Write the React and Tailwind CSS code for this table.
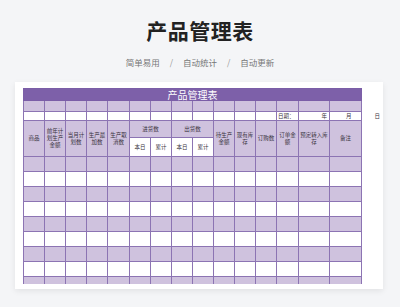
import React from 'react'

const cols = [21, 21, 21, 21, 22, 21, 21, 21, 21, 21, 21, 21, 22, 31, 32]
const dataRows = [0, 1, 2, 3, 4, 5, 6, 7]

const cjk = { fontFamily: '"Noto Sans CJK SC", "Noto Sans", sans-serif' }

function Cell({ children, className = '', ...rest }) {
  return (
    <td
      className={`border border-[#8c74b3] p-0 text-center align-middle leading-[7px] ${className}`}
      {...rest}
    >
      {children}
    </td>
  )
}

export default function App() {
  return (
    <div className="h-[307px] w-[400px] overflow-hidden bg-[#f4f5f7]" style={cjk}>
      {/* Page heading */}
      <div className="flex flex-col items-center pt-[16px]">
        <h1 className="text-[21px] font-bold leading-[28px] tracking-[0.5px] text-[#222]">产品管理表</h1>
        <div className="mt-[11px] flex items-center gap-[10px] text-[8.5px] leading-[14px] text-[#777]">
          <span>简单易用</span>
          <span className="text-[#999]">/</span>
          <span>自动统计</span>
          <span className="text-[#999]">/</span>
          <span>自动更新</span>
        </div>
      </div>

      {/* Sheet card */}
      <div className="ml-[15px] mt-[13px] h-[207px] w-[368px] overflow-hidden bg-white pl-[8px] pt-[6px] shadow-[0_2px_6px_rgba(0,0,0,0.08)]">
        <table className="table-fixed border-collapse text-[5.5px] text-[#3a3340]" style={{ width: 339 }}>
          <colgroup>
            {cols.map((w, i) => (
              <col key={i} style={{ width: w }} />
            ))}
          </colgroup>
          <tbody>
            <tr className="h-[12px]">
              <td colSpan={15} className="border border-[#7b5ea7] bg-[#7d60a9] p-0 text-center text-[10px] leading-[11px] text-white">
                产品管理表
              </td>
            </tr>
            <tr className="h-[11px]">
              {cols.map((_, i) => (
                <Cell key={i} className="bg-[#cfc2de]" />
              ))}
            </tr>
            <tr className="h-[9px]">
              {cols.map((_, i) => {
                if (i === 12)
                  return (
                    <Cell key={i} className="bg-white text-left">
                      <span className="pl-[1px]">日期：</span>
                    </Cell>
                  )
                if (i === 13)
                  return (
                    <Cell key={i} className="bg-white text-right">
                      <span className="pr-[2px]">年</span>
                    </Cell>
                  )
                if (i === 14)
                  return (
                    <Cell key={i} className="overflow-visible whitespace-nowrap bg-white text-left">
                      <span className="pl-[16px]">月</span>
                      <span className="pl-[23px]">日</span>
                    </Cell>
                  )
                return <Cell key={i} className="bg-white" />
              })}
            </tr>
            <tr className="h-[17px]">
              <Cell rowSpan={2} className="bg-[#cfc2de]">商品</Cell>
              <Cell rowSpan={2} className="bg-[#cfc2de]">前年计<br />划生产<br />金额</Cell>
              <Cell rowSpan={2} className="bg-[#cfc2de]">当月计<br />划数</Cell>
              <Cell rowSpan={2} className="bg-[#cfc2de]">生产最<br />加数</Cell>
              <Cell rowSpan={2} className="bg-[#cfc2de]">生产取<br />消数</Cell>
              <Cell colSpan={2} className="bg-[#cfc2de]">进货数</Cell>
              <Cell colSpan={2} className="bg-[#cfc2de]">出货数</Cell>
              <Cell rowSpan={2} className="bg-[#cfc2de]">待生产<br />金额</Cell>
              <Cell rowSpan={2} className="bg-[#cfc2de]">现有库<br />存</Cell>
              <Cell rowSpan={2} className="bg-[#cfc2de]">订购数</Cell>
              <Cell rowSpan={2} className="bg-[#cfc2de]">订单金<br />额</Cell>
              <Cell rowSpan={2} className="bg-[#cfc2de]">预定转入库<br />存</Cell>
              <Cell rowSpan={2} className="bg-[#cfc2de]">备注</Cell>
            </tr>
            <tr className="h-[19px]">
              <Cell className="bg-white">本日</Cell>
              <Cell className="bg-white">累计</Cell>
              <Cell className="bg-white">本日</Cell>
              <Cell className="bg-white">累计</Cell>
            </tr>
            {dataRows.map((r) => (
              <tr key={r} className="h-[15px]">
                {cols.map((_, i) => (
                  <Cell key={i} className={r % 2 === 0 ? 'bg-[#cfc2de]' : 'bg-white'} />
                ))}
              </tr>
            ))}
            <tr className="h-[7px]">
              {cols.map((_, i) => (
                <Cell key={i} className="bg-[#cfc2de] border-b-0" />
              ))}
            </tr>
          </tbody>
        </table>
      </div>
    </div>
  )
}
